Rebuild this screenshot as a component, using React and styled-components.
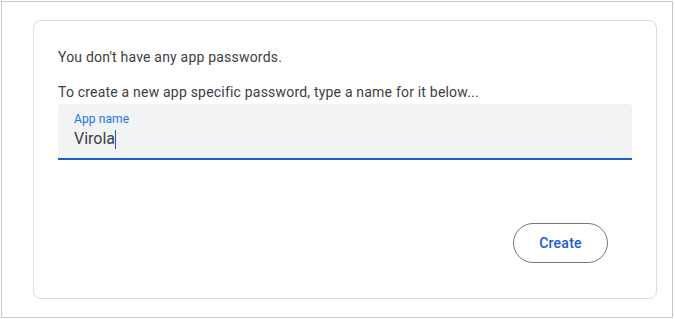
import React from "react";
import styled, { createGlobalStyle } from "styled-components";

const Global = createGlobalStyle`
  html, body { margin: 0; padding: 0; background: #fff; }
  body { padding: 1px; font-family: Roboto, "Noto Sans", Arial, sans-serif; }
`;

const Frame = styled.div`
  box-sizing: border-box;
  width: 672px;
  height: 317px;
  border: 1px solid #c8c8c8;
  padding: 18px 15px 18px 31px;
`;

const Card = styled.section`
  box-sizing: border-box;
  width: 624px;
  height: 279px;
  border: 1px solid #dadce0;
  border-radius: 8px;
  padding: 26px 24px 0 24px;
  display: flex;
  flex-direction: column;
`;

const Text = styled.p`
  margin: 0 0 ${(p) => p.$gap}px 0;
  font-size: 14px;
  line-height: 20px;
  color: #3c4043;
  letter-spacing: 0.2px;
`;

const Field = styled.label`
  box-sizing: border-box;
  display: flex;
  flex-direction: column;
  height: 56px;
  background: #f1f3f4;
  border-radius: 4px 4px 0 0;
  border-bottom: 2px solid #1a5fc8;
  padding: 7px 16px 0 16px;
`;

const Label = styled.span`
  font-size: 12px;
  line-height: 16px;
  color: #1a73e8;
  letter-spacing: 0.1px;
`;

const Value = styled.span`
  font-size: 16px;
  line-height: 24px;
  color: #3c4043;
  display: flex;
  align-items: center;
`;

const Caret = styled.span`
  display: inline-block;
  width: 1px;
  height: 19px;
  background: #1a5fc8;
`;

const Actions = styled.div`
  display: flex;
  justify-content: flex-end;
  margin-top: 63px;
  padding-right: 24px;
`;

const Button = styled.button`
  box-sizing: border-box;
  width: 95px;
  height: 40px;
  border-radius: 20px;
  border: 1px solid #747775;
  background: #fff;
  color: #1a5ad8;
  font-family: Roboto, "Noto Sans", Arial, sans-serif;
  font-size: 14px;
  font-weight: 500;
  letter-spacing: 0.25px;
  cursor: pointer;
`;

export default function App() {
  return (
    <>
      <Global />
      <Frame>
        <Card>
          <Text $gap={15}>You don't have any app passwords.</Text>
          <Text $gap={2}>To create a new app specific password, type a name for it below...</Text>
          <Field>
            <Label>App name</Label>
            <Value>
              Virola
              <Caret />
            </Value>
          </Field>
          <Actions>
            <Button>Create</Button>
          </Actions>
        </Card>
      </Frame>
    </>
  );
}
